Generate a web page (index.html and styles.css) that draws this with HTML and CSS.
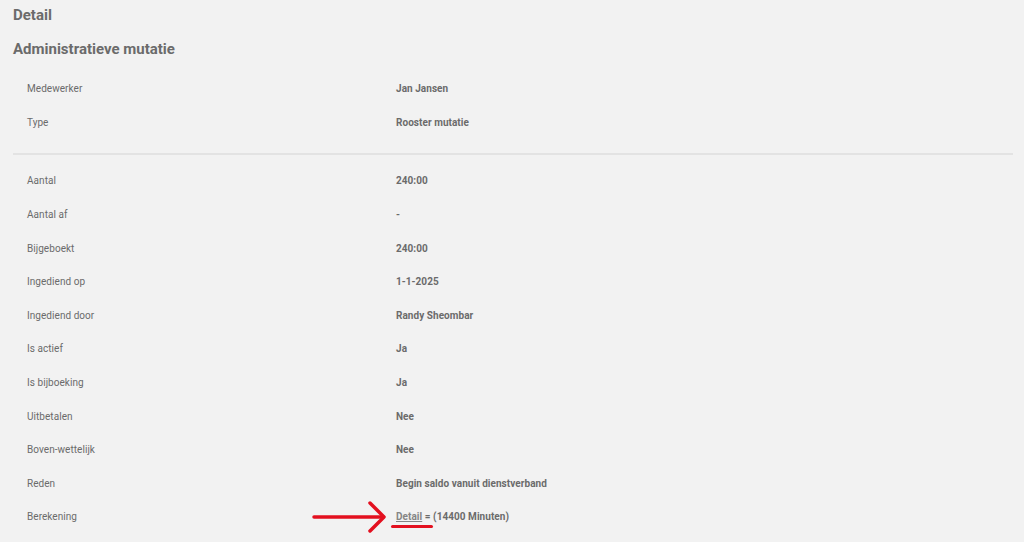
FILE: index.html
```html
<!DOCTYPE html>
<html lang="nl">
<head>
    <meta charset="UTF-8">
    <title>Detail</title>
    <link rel="stylesheet" href="styles.css">
</head>
<body>
    <div class="page">
        <h1 class="title">Detail</h1>
        <h2 class="subtitle">Administratieve mutatie</h2>

        <dl class="fields">
            <div class="row"><dt>Medewerker</dt><dd>Jan Jansen</dd></div>
            <div class="row"><dt>Type</dt><dd>Rooster mutatie</dd></div>
        </dl>

        <hr class="divider">

        <dl class="fields">
            <div class="row"><dt>Aantal</dt><dd>240:00</dd></div>
            <div class="row"><dt>Aantal af</dt><dd>-</dd></div>
            <div class="row"><dt>Bijgeboekt</dt><dd>240:00</dd></div>
            <div class="row"><dt>Ingediend op</dt><dd>1-1-2025</dd></div>
            <div class="row"><dt>Ingediend door</dt><dd>Randy Sheombar</dd></div>
            <div class="row"><dt>Is actief</dt><dd>Ja</dd></div>
            <div class="row"><dt>Is bijboeking</dt><dd>Ja</dd></div>
            <div class="row"><dt>Uitbetalen</dt><dd>Nee</dd></div>
            <div class="row"><dt>Boven-wettelijk</dt><dd>Nee</dd></div>
            <div class="row"><dt>Reden</dt><dd>Begin saldo vanuit dienstverband</dd></div>
            <div class="row">
                <dt>Berekening</dt>
                <dd class="calc">
                    <!-- annotation arrow -->
                    <svg class="arrow" width="78" height="32" viewBox="0 0 78 32">
                        <path d="M3 16 H72" stroke="#e3101f" stroke-width="3.5" stroke-linecap="round" fill="none"/>
                        <path d="M59 2 L73 16 L59 30" stroke="#e3101f" stroke-width="3.5" stroke-linecap="round" stroke-linejoin="round" fill="none"/>
                    </svg>
                    <a href="#" class="link">Detail</a> = (14400 Minuten)
                    <span class="mark"></span>
                </dd>
            </div>
        </dl>
    </div>
</body>
</html>
```

FILE: styles.css
```css
body {
    margin: 0;
    background: #f2f2f2;
    font-family: Roboto, "Liberation Sans", sans-serif;
    color: #6b6b6b;
}

.page {
    padding: 6px 11px 0 13px;
}

.title {
    font-size: 15px;
    font-weight: bold;
    margin: 0;
    line-height: 18px;
}

.subtitle {
    font-size: 15px;
    font-weight: bold;
    margin: 16px 0 0 0;
    line-height: 18px;
}

.fields {
    margin: 0;
    padding: 0 0 0 14px;
}

.fields:first-of-type {
    padding-top: 14px;
}

.row {
    display: flex;
    height: 33.6px;
    align-items: center;
    font-size: 10px;
    letter-spacing: 0.05px;
}

.row dt {
    width: 369px;
}

.row dd {
    margin: 0;
    font-weight: bold;
}

.divider {
    border: none;
    border-top: 2px solid #e3e3e3;
    margin: 14px 0 9px 0;
}

.calc {
    position: relative;
}

.link {
    color: #858585;
    text-decoration: underline;
}

.arrow {
    position: absolute;
    left: -85px;
    top: -10px;
}

.mark {
    position: absolute;
    left: -5px;
    top: 14px;
    width: 42px;
    height: 3px;
    border-radius: 2px;
    background: #e3101f;
}
```
